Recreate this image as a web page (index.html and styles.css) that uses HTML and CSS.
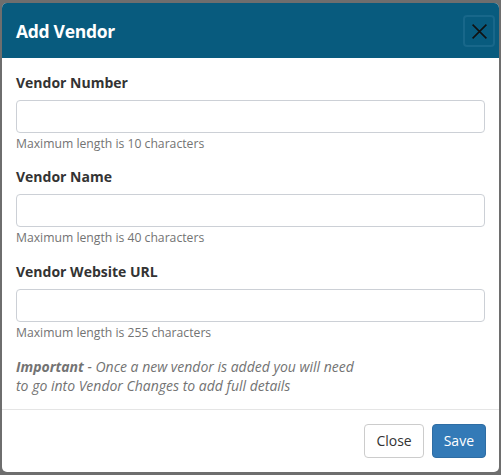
FILE: index.html
```html
<!DOCTYPE html>
<html>
<head>
<meta charset="utf-8">
<link rel="stylesheet" href="styles.css">
</head>
<body>
<div class="modal">
  <div class="modal-header">
    <h4 class="modal-title">Add Vendor</h4>
    <button class="x-btn" aria-label="Close">
      <svg width="17" height="17" viewBox="0 0 16 16"><path d="M1.5 1.5 L14.5 14.5 M14.5 1.5 L1.5 14.5" stroke="#111" stroke-width="1.5" fill="none"/></svg>
    </button>
  </div>
  <div class="modal-body">
    <div class="field">
      <label class="label">Vendor Number</label>
      <input class="input" type="text">
      <div class="help">Maximum length is 10 characters</div>
    </div>
    <div class="field">
      <label class="label">Vendor Name</label>
      <input class="input" type="text">
      <div class="help">Maximum length is 40 characters</div>
    </div>
    <div class="field field-last">
      <label class="label">Vendor Website URL</label>
      <input class="input" type="text">
      <div class="help">Maximum length is 255 characters</div>
    </div>
    <p class="note"><b>Important</b> - Once a new vendor is added you will need<br>to go into Vendor Changes to add full details</p>
  </div>
  <div class="modal-footer">
    <button class="btn btn-default">Close</button>
    <button class="btn btn-primary">Save</button>
  </div>
</div>
</body>
</html>
```
FILE: styles.css
```css
html, body {
  margin: 0;
  padding: 0;
  background: #6e6e6e;
  font-family: "Open Sans", "Liberation Sans", sans-serif;
  color: #333;
}
body {
  padding: 3px 2px 0 2px;
  height: 475px;
  box-sizing: border-box;
}
.modal {
  background: #fff;
  border-radius: 5px;
  overflow: hidden;
  height: 469px;
  display: flex;
  flex-direction: column;
}
.modal-header {
  background: #085b7e;
  height: 55px;
  flex: none;
  display: flex;
  align-items: center;
  justify-content: space-between;
  padding: 0 4px 0 14px;
  box-sizing: border-box;
}
.modal-title {
  margin: 0;
  color: #fff;
  font-size: 17.5px;
  font-weight: 700;
  letter-spacing: -0.3px;
}
.x-btn {
  width: 32px;
  height: 32px;
  margin-top: 1px;
  padding: 0;
  background: transparent;
  border: 2px solid #18678a;
  border-radius: 4px;
  display: flex;
  align-items: center;
  justify-content: center;
}
.modal-body {
  padding: 15px 14px 14px 14px;
  flex: 1;
}
.field {
  margin-bottom: 15px;
}
.field-last {
  padding-top: 1px;
  margin-bottom: 16px;
}
.label {
  display: block;
  font-size: 14px;
  font-weight: 700;
  line-height: 20px;
  margin-bottom: 7px;
  color: #333;
}
.input {
  display: block;
  width: 100%;
  height: 33px;
  box-sizing: border-box;
  border: 1px solid #ccd0d6;
  border-radius: 4px;
  font-family: inherit;
  font-size: 14px;
}
.help {
  margin-top: 2px;
  font-size: 12.2px;
  line-height: 17px;
  color: #737373;
}
.note {
  margin: 0;
  font-size: 14px;
  line-height: 19px;
  font-style: italic;
  color: #737373;
}
.note b { font-weight: 700; }
.modal-footer {
  border-top: 1px solid #e5e5e5;
  padding: 14px 13px 14px;
  display: flex;
  justify-content: flex-end;
  gap: 8px;
  flex: none;
}
.btn {
  height: 34px;
  padding: 0 11px;
  font-family: inherit;
  font-size: 14px;
  border-radius: 4px;
  border: 1px solid #ccc;
  line-height: 1;
}
.btn-default {
  background: #fff;
  color: #333;
}
.btn-primary {
  background: #337ab7;
  border-color: #2e6da4;
  color: #fff;
}
```
